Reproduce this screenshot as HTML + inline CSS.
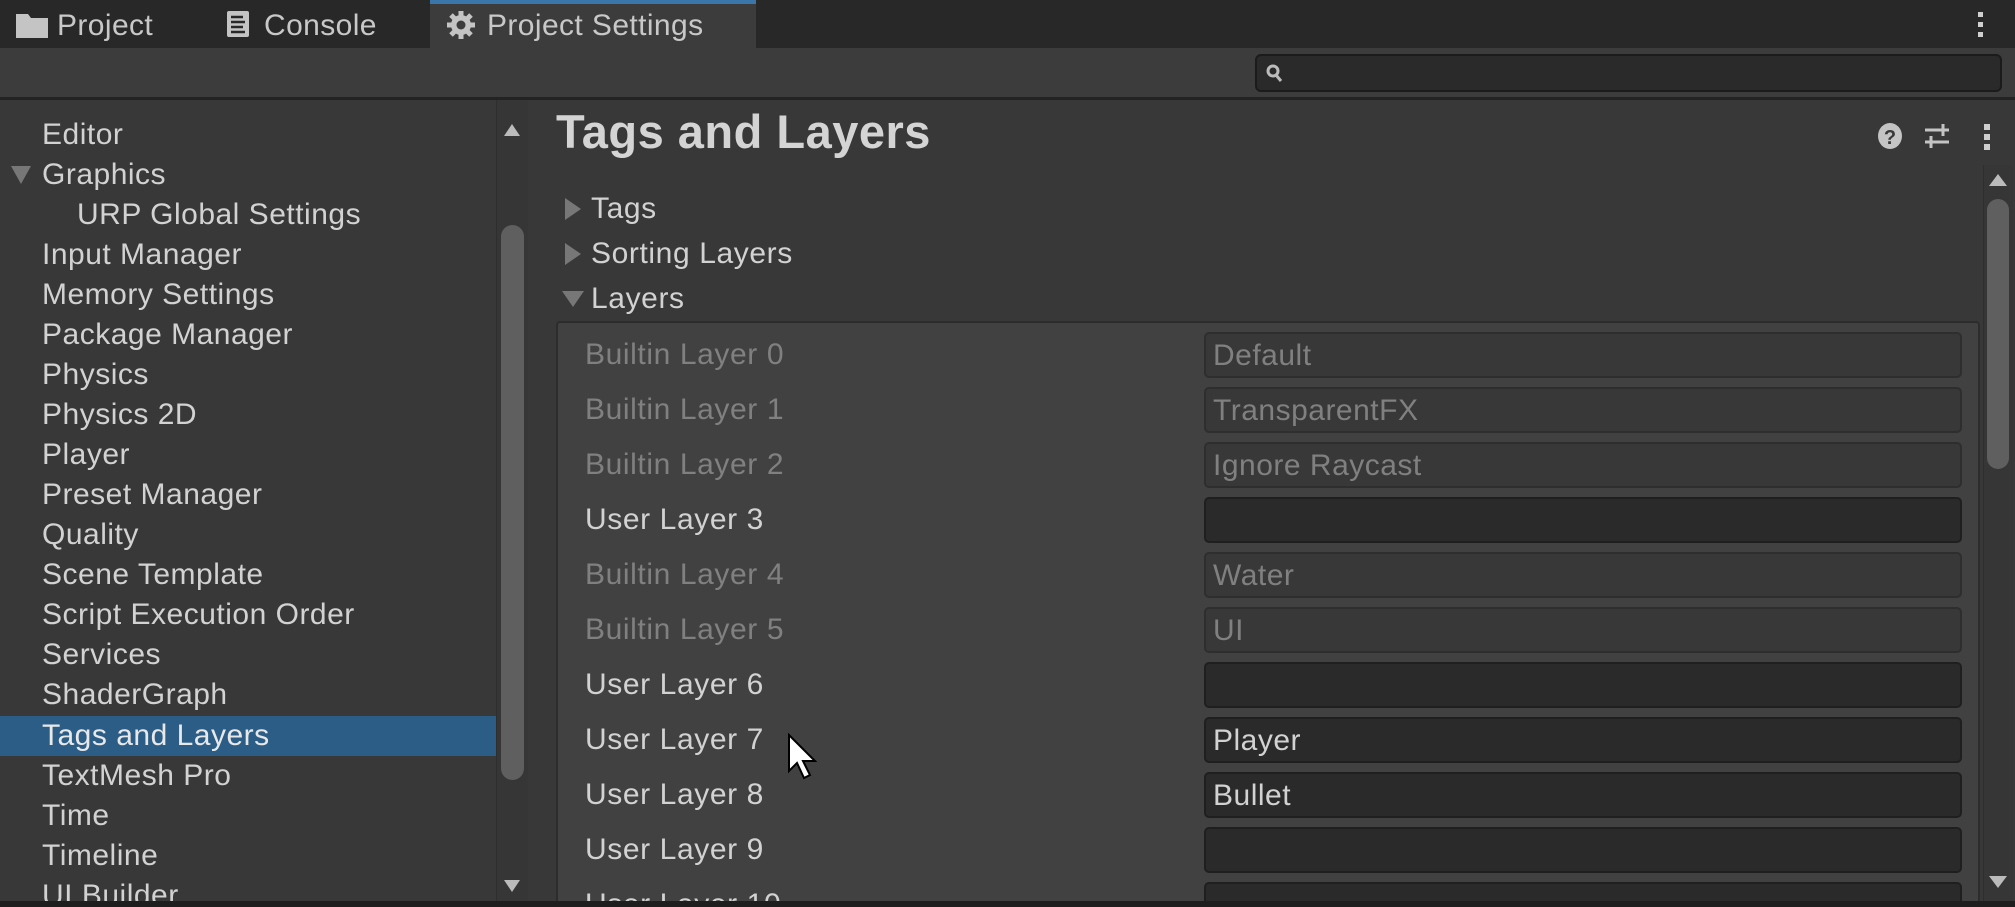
<!DOCTYPE html>
<html style="overflow:hidden;width:2015px;height:907px"><head><meta charset="utf-8"><style>
*{margin:0;padding:0;box-sizing:border-box}
body{width:2015px;height:907px;overflow:hidden;background:#383838;font-family:"Liberation Sans",sans-serif;color:#d2d2d2;position:relative}
.abs{position:absolute}
.tabbar{left:0;top:0;width:2015px;height:48px;background:#282828}
.tab{top:0;height:48px;font-size:30px;line-height:52px;color:#c8c8c8;letter-spacing:0.4px}
.toolbar{left:0;top:48px;width:2015px;height:52px;background:#3c3c3c;border-bottom:3px solid #232323}
.left{left:0;top:100px;width:528px;height:801px;background:#383838;border-right:4px solid #232323}
.item{left:42px;font-size:30px;line-height:40px;height:40px;white-space:nowrap;letter-spacing:0.5px}
.sel{left:0;width:496px;height:40px;background:#2c5d87}
.right{left:532px;top:100px;width:1483px;height:801px;background:#383838}
.lbl{font-size:30px;white-space:nowrap;letter-spacing:0.6px}
.field{left:1204px;width:758px;height:46px;border-radius:5px;font-size:30px;line-height:44px;padding-left:7px;letter-spacing:0.5px}
.dis{background:#383838;border:2px solid #2e2e2e;color:#808080}
.en{background:#2a2a2a;border:2px solid #1f1f1f;color:#d2d2d2}
</style></head><body>
<div class="abs tabbar"></div>
<div class="abs" style="left:430px;top:0;width:326px;height:48px;background:#3c3c3c;border-top:4px solid #3a76aa"></div>
<svg class="abs" style="left:16px;top:14px" width="32" height="24"><path d="M0 0h12l3 4h17v20H0z" fill="#c4c4c4"/></svg>
<div class="abs tab" style="left:57px">Project</div>
<svg class="abs" style="left:226px;top:10px" width="24" height="28"><rect x="1" y="1" width="22" height="26" rx="2" fill="#c4c4c4"/><path d="M5 7h12M5 12h14M5 17h12M5 22h14" stroke="#282828" stroke-width="2.5"/></svg>
<div class="abs tab" style="left:264px">Console</div>
<svg class="abs" style="left:446px;top:10px" width="30" height="30" viewBox="0 0 30 30"><g fill="#c4c4c4"><circle cx="15" cy="15" r="10"/><g stroke="#c4c4c4" stroke-width="5"><path d="M15 1v28M1 15h28M5 5l20 20M25 5L5 25"/></g></g><circle cx="15" cy="15" r="4.5" fill="#3c3c3c"/></svg>
<div class="abs tab" style="left:487px">Project Settings</div>
<div class="abs" style="left:1978px;top:12px;width:5px;height:26px;background:repeating-linear-gradient(#cfcfcf 0 5px,transparent 5px 10px)"></div>
<div class="abs toolbar"></div>
<div class="abs" style="left:1255px;top:54px;width:747px;height:38px;background:#2a2a2a;border:2px solid #1b1b1b;border-radius:6px"></div>
<svg class="abs" style="left:1266px;top:64px" width="18" height="20"><circle cx="7" cy="7" r="5" fill="none" stroke="#bbb" stroke-width="3"/><path d="M10 11l5 6" stroke="#bbb" stroke-width="3"/></svg>

<div class="abs left"></div>
<div class="abs sel" style="top:716px"></div>
<div class="abs" style="left:496px;top:100px;width:32px;height:801px;background:#363636;border-left:1px solid #2e2e2e"></div>
<svg class="abs" style="left:504px;top:124px" width="16" height="12"><path d="M0 12L8 0l8 12z" fill="#bbb"/></svg>
<svg class="abs" style="left:504px;top:880px" width="16" height="12"><path d="M0 0h16L8 12z" fill="#bbb"/></svg>
<div class="abs" style="left:501px;top:225px;width:23px;height:555px;background:#5f5f5f;border-radius:12px"></div>
<svg class="abs" style="left:11px;top:166px" width="20" height="18"><path d="M0 0h20L10 18z" fill="#777"/></svg>
<div class="abs" style="left:0;top:100px;width:496px;height:801px;overflow:hidden">
<div class="abs item" style="top:15px">Editor</div>
<div class="abs item" style="top:55px">Graphics</div>
<div class="abs item" style="top:95px;left:77px">URP Global Settings</div>
<div class="abs item" style="top:135px">Input Manager</div>
<div class="abs item" style="top:175px">Memory Settings</div>
<div class="abs item" style="top:215px">Package Manager</div>
<div class="abs item" style="top:255px">Physics</div>
<div class="abs item" style="top:295px">Physics 2D</div>
<div class="abs item" style="top:335px">Player</div>
<div class="abs item" style="top:375px">Preset Manager</div>
<div class="abs item" style="top:415px">Quality</div>
<div class="abs item" style="top:455px">Scene Template</div>
<div class="abs item" style="top:495px">Script Execution Order</div>
<div class="abs item" style="top:535px">Services</div>
<div class="abs item" style="top:575px">ShaderGraph</div>
<div class="abs item" style="top:616px;color:#e8e8e8">Tags and Layers</div>
<div class="abs item" style="top:656px">TextMesh Pro</div>
<div class="abs item" style="top:696px">Time</div>
<div class="abs item" style="top:736px">Timeline</div>
<div class="abs item" style="top:776px">UI Builder</div>
</div>

<div class="abs right"></div>
<div class="abs" style="left:556px;top:104px;font-size:47px;font-weight:bold;color:#d4d4d4;white-space:nowrap;letter-spacing:0.5px">Tags and Layers</div>
<svg class="abs" style="left:1877px;top:122px" width="26" height="28"><ellipse cx="13" cy="14" rx="12" ry="13" fill="#c4c4c4"/><text x="13" y="22" font-size="20" font-weight="bold" text-anchor="middle" fill="#383838" font-family="Liberation Sans">?</text></svg>
<svg class="abs" style="left:1923px;top:122px" width="28" height="28"><path d="M2 8h24M20 2v12M2 20h24M8 14v12" stroke="#c4c4c4" stroke-width="3"/></svg>
<div class="abs" style="left:1984px;top:124px;width:6px;height:26px;background:repeating-linear-gradient(#cfcfcf 0 6px,transparent 6px 10px)"></div>
<div class="abs" style="left:1983px;top:165px;width:30px;height:736px;background:#363636;border-left:1px solid #2e2e2e"></div>
<svg class="abs" style="left:1989px;top:174px" width="18" height="12"><path d="M0 12L9 0l9 12z" fill="#bbb"/></svg>
<svg class="abs" style="left:1989px;top:876px" width="18" height="12"><path d="M0 0h18L9 12z" fill="#bbb"/></svg>
<div class="abs" style="left:1987px;top:199px;width:22px;height:270px;background:#5f5f5f;border-radius:11px"></div>

<svg class="abs" style="left:565px;top:198px" width="16" height="22"><path d="M0 0l16 11L0 22z" fill="#777"/></svg>
<div class="abs lbl" style="left:591px;top:192px">Tags</div>
<svg class="abs" style="left:565px;top:243px" width="16" height="22"><path d="M0 0l16 11L0 22z" fill="#777"/></svg>
<div class="abs lbl" style="left:591px;top:237px">Sorting Layers</div>
<svg class="abs" style="left:562px;top:291px" width="22" height="16"><path d="M0 0h22L11 16z" fill="#777"/></svg>
<div class="abs lbl" style="left:591px;top:282px">Layers</div>

<div class="abs" style="left:556px;top:321px;width:1424px;height:580px;overflow:hidden;background:#414141;border:2px solid #2c2c2c;border-bottom:none;border-radius:4px 4px 0 0">
<div style="position:absolute;left:-558px;top:-323px;width:2015px;height:907px">
<div class="abs lbl" style="left:585px;top:338px;color:#808080">Builtin Layer 0</div><div class="abs field dis" style="top:332px">Default</div>
<div class="abs lbl" style="left:585px;top:393px;color:#808080">Builtin Layer 1</div><div class="abs field dis" style="top:387px">TransparentFX</div>
<div class="abs lbl" style="left:585px;top:448px;color:#808080">Builtin Layer 2</div><div class="abs field dis" style="top:442px">Ignore Raycast</div>
<div class="abs lbl" style="left:585px;top:503px">User Layer 3</div><div class="abs field en" style="top:497px"></div>
<div class="abs lbl" style="left:585px;top:558px;color:#808080">Builtin Layer 4</div><div class="abs field dis" style="top:552px">Water</div>
<div class="abs lbl" style="left:585px;top:613px;color:#808080">Builtin Layer 5</div><div class="abs field dis" style="top:607px">UI</div>
<div class="abs lbl" style="left:585px;top:668px">User Layer 6</div><div class="abs field en" style="top:662px"></div>
<div class="abs lbl" style="left:585px;top:723px">User Layer 7</div><div class="abs field en" style="top:717px">Player</div>
<div class="abs lbl" style="left:585px;top:778px">User Layer 8</div><div class="abs field en" style="top:772px">Bullet</div>
<div class="abs lbl" style="left:585px;top:833px">User Layer 9</div><div class="abs field en" style="top:827px"></div>
<div class="abs lbl" style="left:585px;top:888px">User Layer 10</div><div class="abs field en" style="top:882px"></div>
</div></div>

<svg class="abs" style="left:787px;top:733px" width="30" height="48"><path d="M2 2v36l8-8 7 15 6-3-7-14h12z" fill="#fff" stroke="#000" stroke-width="2"/></svg>
<div class="abs" style="left:0;top:901px;width:2015px;height:6px;background:#1e1e1e"></div>
</body></html>
